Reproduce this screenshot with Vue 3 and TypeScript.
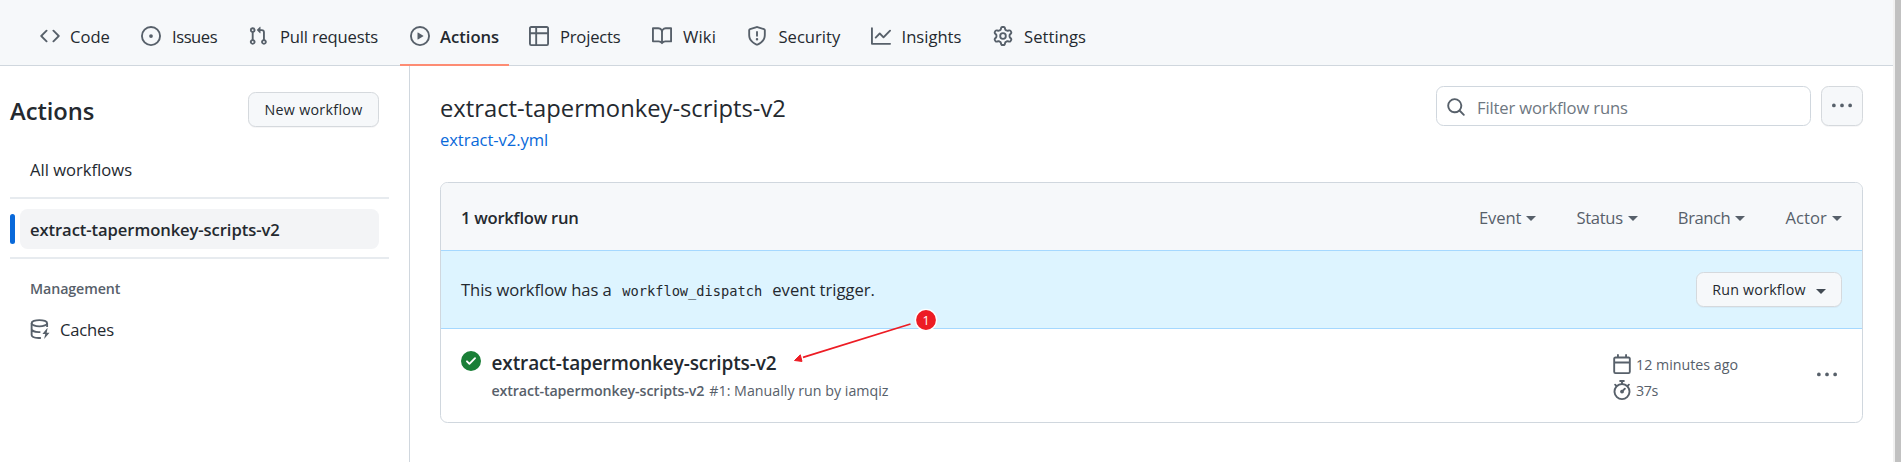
<script setup lang="ts">
interface Tab {
  key: string
  label: string
  icon: string
  active?: boolean
}

const icons: Record<string, string> = {
  code: 'M4.72 3.22a.75.75 0 0 1 1.06 1.06L2.06 8l3.72 3.72a.75.75 0 1 1-1.06 1.06L.47 8.53a.75.75 0 0 1 0-1.06l4.25-4.25Zm6.56 0a.75.75 0 1 0-1.06 1.06L13.94 8l-3.72 3.72a.75.75 0 1 0 1.06 1.06l4.25-4.25a.75.75 0 0 0 0-1.06l-4.25-4.25Z',
  issues: 'M8 9.5a1.5 1.5 0 1 0 0-3 1.5 1.5 0 0 0 0 3ZM8 0a8 8 0 1 1 0 16A8 8 0 0 1 8 0ZM1.5 8a6.5 6.5 0 1 0 13 0 6.5 6.5 0 0 0-13 0Z',
  pulls: 'M7.177 3.073 9.573.677A.25.25 0 0 1 10 .854v4.792a.25.25 0 0 1-.427.177L7.177 3.427a.25.25 0 0 1 0-.354ZM3.75 2.5a.75.75 0 1 0 0 1.5.75.75 0 0 0 0-1.5Zm-2.25.75a2.25 2.25 0 1 1 3 2.122v5.256a2.251 2.251 0 1 1-1.5 0V5.372A2.25 2.25 0 0 1 1.5 3.25ZM11 2.5h-1V4h1a1 1 0 0 1 1 1v5.628a2.251 2.251 0 1 0 1.5 0V5A2.5 2.5 0 0 0 11 2.5Zm1 10.25a.75.75 0 1 1 1.5 0 .75.75 0 0 1-1.5 0ZM3.75 12a.75.75 0 1 0 0 1.5.75.75 0 0 0 0-1.5Z',
  play: 'M1.5 8a6.5 6.5 0 1 0 13 0 6.5 6.5 0 0 0-13 0ZM8 0a8 8 0 1 1 0 16A8 8 0 0 1 8 0ZM6.379 5.227A.25.25 0 0 0 6 5.442v5.117a.25.25 0 0 0 .379.214l4.264-2.559a.25.25 0 0 0 0-.428L6.379 5.227Z',
  projects: 'M0 1.75C0 .784.784 0 1.75 0h12.5C15.216 0 16 .784 16 1.75v12.5A1.75 1.75 0 0 1 14.25 16H1.75A1.75 1.75 0 0 1 0 14.25ZM6.5 6.5v8h7.75a.25.25 0 0 0 .25-.25V6.5Zm8-1.5V1.75a.25.25 0 0 0-.25-.25H6.5V5Zm-13 1.5v7.75c0 .138.112.25.25.25H5v-8ZM5 5V1.5H1.75a.25.25 0 0 0-.25.25V5Z',
  wiki: 'M0 1.75A.75.75 0 0 1 .75 1h4.253c1.227 0 2.317.59 3 1.501A3.744 3.744 0 0 1 11.006 1h4.245a.75.75 0 0 1 .75.75v10.5a.75.75 0 0 1-.75.75h-4.507a2.25 2.25 0 0 0-1.591.659l-.622.621a.75.75 0 0 1-1.06 0l-.622-.621A2.25 2.25 0 0 0 5.258 13H.75a.75.75 0 0 1-.75-.75Zm7.251 10.324.004-5.073-.002-2.253A2.25 2.25 0 0 0 5.003 2.5H1.5v9h3.757a3.75 3.75 0 0 1 1.994.574ZM8.755 4.75l-.004 7.322a3.752 3.752 0 0 1 1.992-.572H14.5v-9h-3.495a2.25 2.25 0 0 0-2.25 2.25Z',
  security: 'M7.467.133a1.748 1.748 0 0 1 1.066 0l5.25 1.68A1.75 1.75 0 0 1 15 3.48V7c0 1.566-.32 3.182-1.303 4.682-.983 1.498-2.585 2.813-5.032 3.855a1.697 1.697 0 0 1-1.33 0c-2.447-1.042-4.049-2.357-5.032-3.855C1.32 10.182 1 8.566 1 7V3.48a1.75 1.75 0 0 1 1.217-1.667Zm.61 1.429a.25.25 0 0 0-.153 0l-5.25 1.68a.25.25 0 0 0-.174.238V7c0 1.358.275 2.666 1.057 3.86.784 1.194 2.121 2.34 4.366 3.297a.196.196 0 0 0 .154 0c2.245-.956 3.582-2.104 4.366-3.298C13.225 9.666 13.5 8.36 13.5 7V3.48a.251.251 0 0 0-.174-.237l-5.25-1.68ZM8.75 4.75v3a.75.75 0 0 1-1.5 0v-3a.75.75 0 0 1 1.5 0ZM9 10.5a1 1 0 1 1-2 0 1 1 0 0 1 2 0Z',
  insights: 'M1.5 1.75V13.5h13.75a.75.75 0 0 1 0 1.5H.75a.75.75 0 0 1-.75-.75V1.75a.75.75 0 0 1 1.5 0Zm14.28 2.53-5.25 5.25a.75.75 0 0 1-1.06 0L7 7.06 4.28 9.78a.751.751 0 0 1-1.06-1.06l3.25-3.25a.75.75 0 0 1 1.06 0L10 7.94l4.72-4.72a.751.751 0 0 1 1.06 1.06Z',
  settings: 'M8 0a8.2 8.2 0 0 1 .701.031C9.444.095 9.99.645 10.16 1.29l.288 1.107c.018.066.079.158.212.224.231.114.454.243.668.386.123.082.233.09.299.071l1.103-.303c.644-.176 1.392.021 1.82.63.27.385.506.792.704 1.218.315.675.111 1.422-.364 1.891l-.814.806c-.049.048-.098.147-.088.294.016.257.016.515 0 .772-.01.147.038.246.088.294l.814.806c.475.469.679 1.216.364 1.891a7.977 7.977 0 0 1-.704 1.217c-.428.61-1.176.807-1.82.63l-1.102-.302c-.067-.019-.177-.011-.3.071a5.909 5.909 0 0 1-.668.386c-.133.066-.194.158-.211.224l-.29 1.106c-.168.646-.715 1.196-1.458 1.26a8.006 8.006 0 0 1-1.402 0c-.743-.064-1.289-.614-1.458-1.26l-.289-1.106c-.018-.066-.079-.158-.212-.224a5.738 5.738 0 0 1-.668-.386c-.123-.082-.233-.09-.299-.071l-1.103.303c-.644.176-1.392-.021-1.82-.63a8.12 8.12 0 0 1-.704-1.218c-.315-.675-.111-1.422.363-1.891l.815-.806c.05-.048.098-.147.088-.294a6.214 6.214 0 0 1 0-.772c.01-.147-.038-.246-.088-.294l-.815-.806C.635 6.045.431 5.298.746 4.623a7.92 7.92 0 0 1 .704-1.217c.428-.61 1.176-.807 1.82-.63l1.102.302c.067.019.177.011.3-.071.214-.143.437-.272.668-.386.133-.066.194-.158.211-.224l.29-1.106C6.009.645 6.556.095 7.299.03 7.53.01 7.764 0 8 0Zm-.571 1.525c-.036.003-.108.036-.137.146l-.289 1.105c-.147.561-.549.967-.998 1.189-.173.086-.34.183-.5.29-.417.278-.97.423-1.529.27l-1.103-.303c-.109-.03-.175.016-.195.045-.22.312-.412.644-.573.99-.014.031-.021.11.059.19l.815.806c.411.406.562.957.53 1.456a4.709 4.709 0 0 0 0 .582c.032.499-.119 1.05-.53 1.456l-.815.806c-.081.08-.073.159-.059.19.162.346.353.677.573.989.02.03.085.076.195.046l1.102-.303c.56-.153 1.113-.008 1.53.27.161.107.328.204.501.29.447.222.85.629.997 1.189l.289 1.105c.029.109.101.143.137.146a6.6 6.6 0 0 0 1.142 0c.036-.003.108-.036.137-.146l.289-1.105c.147-.561.549-.967.998-1.189.173-.086.34-.183.5-.29.417-.278.97-.423 1.529-.27l1.103.303c.109.029.175-.016.195-.045.22-.313.411-.644.573-.99.014-.031.021-.11-.059-.19l-.815-.806c-.411-.406-.562-.957-.53-1.456a4.709 4.709 0 0 0 0-.582c-.032-.499.119-1.05.53-1.456l.815-.806c.081-.08.073-.159.059-.19a6.464 6.464 0 0 0-.573-.989c-.02-.03-.085-.076-.195-.046l-1.102.303c-.56.153-1.113.008-1.53-.27a4.44 4.44 0 0 0-.501-.29c-.447-.222-.85-.629-.997-1.189l-.289-1.105c-.029-.11-.101-.143-.137-.146a6.6 6.6 0 0 0-1.142 0ZM11 8a3 3 0 1 1-6 0 3 3 0 0 1 6 0ZM9.5 8a1.5 1.5 0 1 0-3.001.001A1.5 1.5 0 0 0 9.5 8Z',
  search: 'M10.68 11.74a6 6 0 0 1-7.922-8.982 6 6 0 0 1 8.982 7.922l3.04 3.04a.749.749 0 0 1-1.06 1.06l-3.04-3.04ZM11.5 7a4.499 4.499 0 1 0-8.997 0A4.499 4.499 0 0 0 11.5 7Z',
  kebab: 'M8 9a1.5 1.5 0 1 0 0-3 1.5 1.5 0 0 0 0 3ZM1.5 9a1.5 1.5 0 1 0 0-3 1.5 1.5 0 0 0 0 3Zm13 0a1.5 1.5 0 1 0 0-3 1.5 1.5 0 0 0 0 3Z',
  check: 'M8 16A8 8 0 1 1 8 0a8 8 0 0 1 0 16Zm3.78-9.72a.751.751 0 0 0-1.06-1.06L6.75 9.19 5.28 7.72a.751.751 0 0 0-1.06 1.06l2 2a.75.75 0 0 0 1.06 0l4.5-4.5Z',
  calendar: 'M4.75 0a.75.75 0 0 1 .75.75V2h5V.75a.75.75 0 0 1 1.5 0V2h1.25c.966 0 1.75.784 1.75 1.75v10.5A1.75 1.75 0 0 1 13.25 16H2.75A1.75 1.75 0 0 1 1 14.25V3.75C1 2.784 1.784 2 2.75 2H4V.75A.75.75 0 0 1 4.75 0ZM2.5 7.5v6.75c0 .138.112.25.25.25h10.5a.25.25 0 0 0 .25-.25V7.5Zm10.75-4H2.75a.25.25 0 0 0-.25.25V6h11V3.75a.25.25 0 0 0-.25-.25Z',
  stopwatch: 'M5.75.75A.75.75 0 0 1 6.5 0h3a.75.75 0 0 1 0 1.5h-.75v1l-.001.041a6.724 6.724 0 0 1 3.464 1.435l.007-.006.75-.75a.749.749 0 0 1 1.06 1.06l-.75.75-.006.007a6.75 6.75 0 1 1-10.548 0L2.72 5.03l-.75-.75a.751.751 0 0 1 1.06-1.06l.75.75.007.006A6.72 6.72 0 0 1 7.25 2.541V1.5H6.5a.75.75 0 0 1-.75-.75ZM8 14.5a5.25 5.25 0 1 0 0-10.5 5.25 5.25 0 0 0 0 10.5Zm.389-6.7 1.33-1.33a.75.75 0 1 1 1.061 1.06L9.45 8.861A1.503 1.503 0 0 1 8 10.75a1.499 1.499 0 1 1 .389-2.95Z',
}

const tabs: Tab[] = [
  { key: 'code', label: 'Code', icon: 'code' },
  { key: 'issues', label: 'Issues', icon: 'issues' },
  { key: 'pulls', label: 'Pull requests', icon: 'pulls' },
  { key: 'actions', label: 'Actions', icon: 'play', active: true },
  { key: 'projects', label: 'Projects', icon: 'projects' },
  { key: 'wiki', label: 'Wiki', icon: 'wiki' },
  { key: 'security', label: 'Security', icon: 'security' },
  { key: 'insights', label: 'Insights', icon: 'insights' },
  { key: 'settings', label: 'Settings', icon: 'settings' },
]

const filters = ['Event', 'Status', 'Branch', 'Actor']
const workflow = 'extract-tapermonkey-scripts-v2'
</script>

<template>
  <div class="window">
    <div class="page">
      <nav class="tabs">
        <a v-for="t in tabs" :key="t.key" class="tab" :class="[t.key, { active: t.active }]">
          <svg class="icon" viewBox="0 0 16 16"><path fill-rule="evenodd" :d="icons[t.icon]" /></svg>
          <span>{{ t.label }}</span>
        </a>
      </nav>

      <div class="body">
        <aside class="side">
          <header class="side-head">
            <h2>Actions</h2>
            <button class="btn new">New workflow</button>
          </header>
          <a class="side-item all">All workflows</a>
          <hr />
          <a class="side-item selected">{{ workflow }}</a>
          <hr class="second" />
          <h3>Management</h3>
          <a class="side-item caches">
            <svg class="icon" viewBox="0 0 16 16" fill="none" stroke="currentColor" stroke-width="1.5">
              <ellipse cx="7.5" cy="3.35" rx="6.2" ry="2.5" />
              <path d="M1.3 3.4v9.3c0 1.2 2.4 2.3 5.6 2.5h1.8M1.3 8c0 1.3 2.5 2.4 5.8 2.5h1.2M13.7 3.4v3" />
              <path d="M13.7 7.4 9.9 12h2.3l-.9 3.9 4.3-4.9h-2.3l.8-3.6Z" fill="currentColor" stroke="none" />
            </svg>
            <span>Caches</span>
          </a>
        </aside>

        <main class="main">
          <header class="main-head">
            <div class="titles">
              <h1>{{ workflow }}</h1>
              <a class="file">extract-v2.yml</a>
            </div>
            <div class="search">
              <svg class="icon" viewBox="0 0 16 16"><path fill-rule="evenodd" :d="icons.search" /></svg>
              <span>Filter workflow runs</span>
            </div>
            <button class="btn more">
              <svg class="icon" viewBox="0 0 16 16"><path :d="icons.kebab" /></svg>
            </button>
          </header>

          <section class="panel">
            <div class="panel-head">
              <strong>1 workflow run</strong>
              <div class="filters">
                <span v-for="f in filters" :key="f" class="filter" :class="f.toLowerCase()">
                  <span>{{ f }}</span><i class="caret"></i>
                </span>
              </div>
            </div>
            <div class="trigger">
              <p>
                <span class="before">This workflow has a</span>
                <code>workflow_dispatch</code>
                <span>event trigger.</span>
              </p>
              <button class="btn run"><span>Run workflow</span><i class="caret"></i></button>
            </div>
            <div class="row">
              <svg class="icon check" viewBox="0 0 16 16"><path fill-rule="evenodd" :d="icons.check" /></svg>
              <div class="info">
                <div class="name">{{ workflow }}</div>
                <div class="desc"><b>{{ workflow }}</b><span>#1: Manually run by iamqiz</span></div>
              </div>
              <div class="meta">
                <div><svg class="icon" viewBox="0 0 16 16"><path fill-rule="evenodd" :d="icons.calendar" /></svg><span>12 minutes ago</span></div>
                <div class="duration"><svg class="icon" viewBox="0 0 16 16"><path fill-rule="evenodd" :d="icons.stopwatch" /></svg><span>37s</span></div>
              </div>
              <svg class="icon menu" viewBox="0 0 16 16"><path :d="icons.kebab" /></svg>
            </div>
          </section>
        </main>
      </div>

      <svg class="note" viewBox="0 0 150 64">
        <path d="M122.5 14 15 47.3" stroke="#ed1c24" stroke-width="1.8" fill="none" />
        <path d="M6.5 50.5 12.3 44.8 14 51.4Z" fill="#ed1c24" stroke="#ed1c24" stroke-width="1" />
        <circle cx="138" cy="10" r="10.6" fill="#ed1c24" stroke="#fff" stroke-width="1.4" />
        <text x="138" y="14.6" text-anchor="middle">1</text>
      </svg>
    </div>
    <div class="scrollbar"></div>
  </div>
</template>

<style>
body {
  overflow: hidden;
}
</style>

<style scoped>
* {
  box-sizing: border-box;
}
.window {
  display: flex;
  width: 1901px;
  height: 462px;
  overflow: hidden;
  background: #fff;
  color: #24292f;
  font: 16.6px/24px "Open Sans", "Noto Sans", sans-serif;
  white-space: nowrap;
}
.page {
  position: relative;
  width: 1893px;
  display: flex;
  flex-direction: column;
}
.scrollbar {
  width: 8px;
  background: #c1c1c1;
  border-left: 2px solid #f1f1f1;
}
h1, h2, h3, p {
  margin: 0;
}
.icon {
  display: block;
  flex: none;
  width: 20px;
  height: 20px;
  fill: #57606a;
}

.tabs {
  display: grid;
  grid-template-columns: 101px 107px 162px 119px 123px 95px 124px 122px 1fr;
  height: 66px;
  padding: 0 0 0 30px;
  background: #f6f8fa;
  border-bottom: 1px solid #d0d7de;
}
.tab {
  display: flex;
  align-items: center;
  justify-self: start;
  gap: 10.5px;
  height: 66px;
  padding: 6px 10px 0;
}
.tab span {
  padding-top: 1px;
}
.tab.active {
  width: 109px;
  font-weight: 600;
  border-bottom: 2px solid #fd8c73;
  padding-top: 8px;
}
.code { gap: 10px; }
.issues { letter-spacing: -0.45px; gap: 11px; }
.pulls { letter-spacing: -0.19px; gap: 12px; }
.actions { gap: 10px; }
.projects { letter-spacing: -0.2px; gap: 11px; }
.wiki { letter-spacing: 0.14px; gap: 11px; }
.security { gap: 11.5px; }
.insights { gap: 10.5px; }
.settings { letter-spacing: 0.05px; gap: 11px; }

.body {
  display: flex;
  flex: 1;
}
.side {
  width: 410px;
  padding: 26px 20px 0 10px;
  border-right: 1px solid #d0d7de;
}
.side-head {
  display: flex;
  align-items: center;
  justify-content: space-between;
  height: 35px;
  padding-right: 10px;
}
h2 {
  font-size: 23.75px;
  font-weight: 600;
  letter-spacing: -0.05px;
  line-height: 33px;
  padding-top: 4px;
}
.btn {
  display: flex;
  align-items: center;
  justify-content: center;
  height: 35px;
  padding: 0;
  font: 500 14.25px/20px "Open Sans", "Noto Sans", sans-serif;
  color: #24292f;
  background: #f6f8fa;
  border: 1px solid #d5d9dd;
  border-radius: 7.5px;
  box-shadow: 0 1px 0 rgba(31, 35, 40, 0.04);
}
.new {
  width: 131px;
  letter-spacing: 0.3px;
}
.side-item {
  display: flex;
  align-items: center;
  height: 40px;
  margin-left: 10px;
  padding-left: 10px;
  border-radius: 7.5px;
}
.all {
  margin-top: 23px;
}
hr {
  height: 2px;
  margin: 7px 0 10px;
  border: 0;
  background: #e7ebef;
}
hr.second {
  margin-top: 8px;
}
.selected {
  position: relative;
  margin-right: 10px;
  padding-top: 2px;
  background: #f3f4f6;
  font-weight: 600;
  letter-spacing: -0.08px;
}
.selected::before {
  content: "";
  position: absolute;
  left: -10px;
  top: 5px;
  width: 5px;
  height: 30px;
  border-radius: 3px;
  background: #0969da;
}
h3 {
  margin: 20px 0 10px 20px;
  font-size: 14.25px;
  line-height: 20px;
  font-weight: 600;
  letter-spacing: -0.1px;
  color: #57606a;
}
.caches {
  gap: 10px;
  letter-spacing: -0.18px;
}
.caches .icon {
  fill: none;
  color: #57606a;
}
.caches span {
  padding-top: 1px;
}

.main {
  flex: 1;
  padding: 20px 30px 0 30px;
}
.main-head {
  display: flex;
  align-items: flex-start;
  height: 96px;
}
.titles {
  flex: 1;
  padding-top: 4px;
}
h1 {
  font-size: 23.75px;
  font-weight: 400;
  line-height: 36px;
}
.file {
  display: block;
  line-height: 24px;
  margin-top: 2px;
  letter-spacing: -0.07px;
  color: #0969da;
}
.search {
  display: flex;
  align-items: center;
  gap: 11px;
  width: 375px;
  height: 40px;
  padding-left: 9px;
  border: 1px solid #d0d7de;
  border-radius: 7.5px;
  color: #6e7781;
  letter-spacing: -0.14px;
}
.search .icon {
  margin-top: 1px;
}
.search span {
  padding-top: 3px;
}
.more {
  width: 42px;
  height: 40px;
  margin-left: 10px;
}

.panel {
  height: 241px;
  border: 1px solid #d0d7de;
  border-radius: 7.5px;
  overflow: hidden;
}
.panel-head {
  display: flex;
  align-items: center;
  justify-content: space-between;
  height: 67px;
  padding: 2px 20px 0;
  background: #f6f8fa;
}
.panel-head strong {
  font-weight: 600;
  letter-spacing: -0.25px;
}
.filters {
  display: flex;
  gap: 40px;
  color: #57606a;
}
.filter {
  display: flex;
  align-items: center;
  gap: 5px;
}
.event { letter-spacing: -0.1px; }
.status { letter-spacing: -0.3px; }
.branch { letter-spacing: -0.42px; }
.actor { letter-spacing: 0.1px; }
.caret {
  border: 5px solid transparent;
  border-top-color: currentColor;
  border-bottom: 0;
}
.filter .caret {
  margin-top: 2px;
}
.trigger {
  display: flex;
  align-items: center;
  justify-content: space-between;
  height: 79px;
  padding: 0 20px;
  background: #ddf4ff;
  border-top: 1px solid #a5d8ff;
  border-bottom: 1px solid #a5d8ff;
}
.trigger p {
  display: flex;
  align-items: baseline;
}
.before {
  letter-spacing: -0.06px;
}
code {
  margin: 0 10px 0 10.5px;
  font: 13.7px/20px "DejaVu Sans Mono", "Liberation Mono", monospace;
}
.run {
  width: 146px;
  gap: 10px;
}
.run span {
  letter-spacing: 0.2px;
}
.run .caret {
  margin-top: 4px;
  color: #424a53;
}
.row {
  display: flex;
  align-items: flex-start;
  padding: 0 25px 0 20px;
}
.check {
  margin-top: 22px;
  fill: #1a7f37;
}
.info {
  flex: 1;
  margin-left: 10.5px;
  padding-top: 21px;
}
.name {
  font-size: 19px;
  font-weight: 600;
  line-height: 26px;
  letter-spacing: -0.12px;
}
.desc {
  display: flex;
  gap: 5px;
  margin-top: 5px;
  font-size: 14.25px;
  line-height: 20px;
  color: #57606a;
}
.desc b {
  font-weight: 600;
  letter-spacing: -0.12px;
}
.meta {
  width: 205px;
  padding-top: 23px;
  font-size: 14.25px;
  line-height: 20px;
  color: #57606a;
}
.meta div {
  display: flex;
  align-items: center;
  gap: 4px;
  height: 26px;
}
.meta div .icon {
  margin-top: -3px;
}
.duration {
  letter-spacing: -0.36px;
}
.menu {
  margin-top: 36px;
}
.note {
  position: absolute;
  left: 788px;
  top: 310px;
  width: 150px;
  height: 64px;
  overflow: visible;
}
.note text {
  font: 12.5px "Open Sans", "Noto Sans", sans-serif;
  fill: #fff;
}
</style>
